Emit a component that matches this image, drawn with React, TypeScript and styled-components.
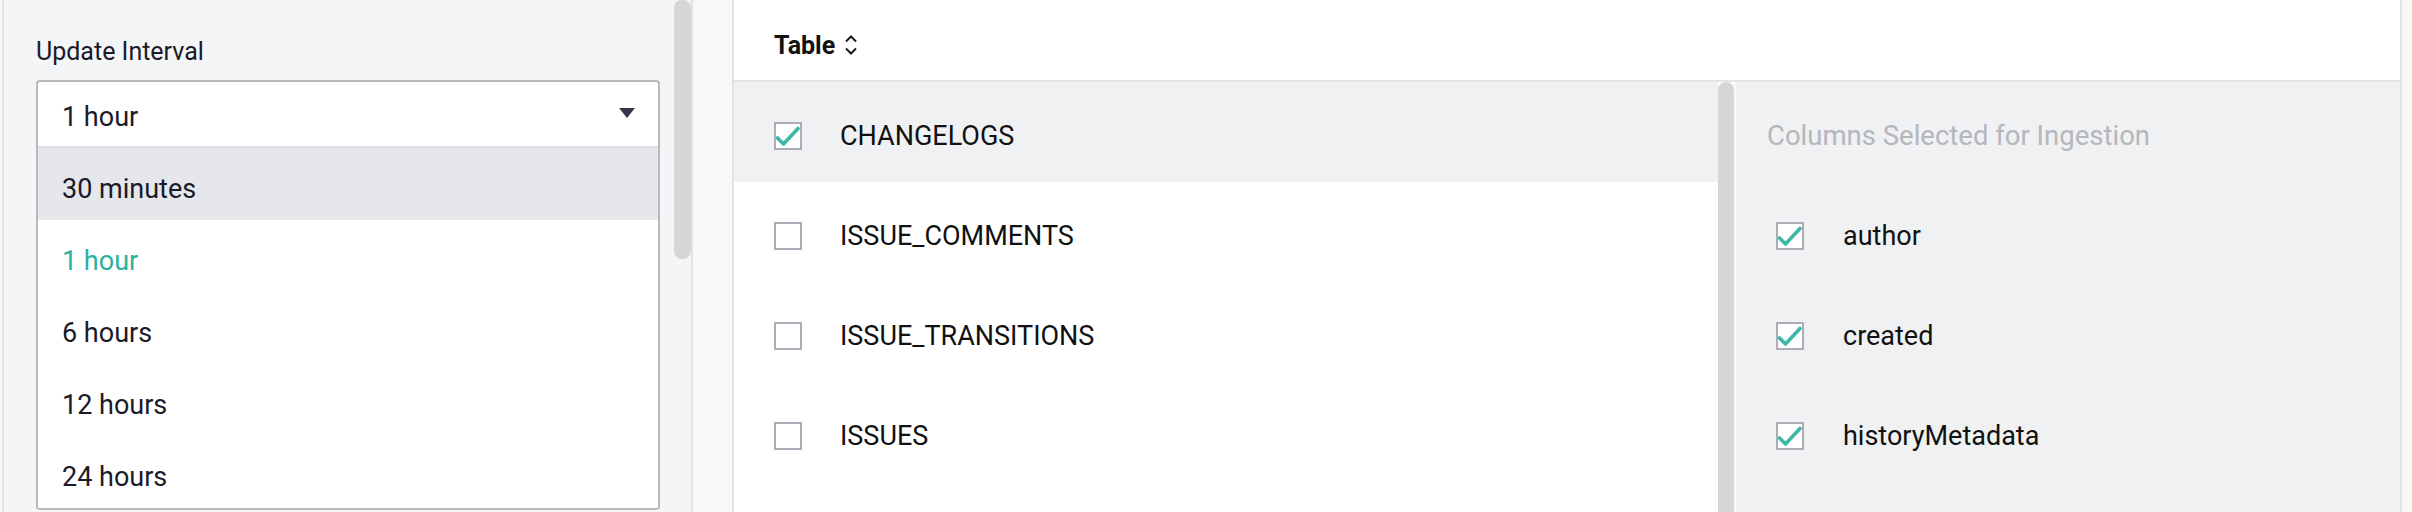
import styled, { createGlobalStyle } from "styled-components";

const intervals = ["30 minutes", "1 hour", "6 hours", "12 hours", "24 hours"];
const tables = ["CHANGELOGS", "ISSUE_COMMENTS", "ISSUE_TRANSITIONS", "ISSUES"];
const columns = ["author", "created", "historyMetadata"];

const GlobalStyle = createGlobalStyle`
  body {
    margin: 0;
    background: #f8f8f8;
    font-family: Roboto, "Liberation Sans", sans-serif;
    color: #14141f;
  }
`;

function Check({ checked }: { checked?: boolean }) {
  return (
    <Checkbox>
      {checked && (
        <svg width="24" height="24" viewBox="0 0 24 24">
          <path
            d="M1.5 14 L7.5 20 L22 4.5"
            fill="none"
            stroke="#3db7a6"
            strokeWidth="3.6"
            strokeLinecap="round"
            strokeLinejoin="round"
          />
        </svg>
      )}
    </Checkbox>
  );
}

export default function App() {
  return (
    <Page>
      <GlobalStyle />
      <LeftPanel>
        <PanelContent>
          <FieldLabel>Update Interval</FieldLabel>
          <Dropdown>
            <SelectBox>
              <SelectValue>1 hour</SelectValue>
              <Caret />
            </SelectBox>
            {intervals.map((item, i) => (
              <Option key={item} $active={i === 0} $selected={item === "1 hour"}>
                {item}
              </Option>
            ))}
          </Dropdown>
        </PanelContent>
        <Scrollbar>
          <ScrollThumb $height={259} />
        </Scrollbar>
      </LeftPanel>
      <Gutter />
      <TablePanel>
        <TableHeader>
          <HeaderLabel>Table</HeaderLabel>
          <SortIcon width="16" height="24" viewBox="0 0 16 24">
            <path
              d="M3 8.5 L8 3.5 L13 8.5 M3 15.5 L8 20.5 L13 15.5"
              fill="none"
              stroke="#1a1a1a"
              strokeWidth="2"
            />
          </SortIcon>
        </TableHeader>
        <TableBody>
          <TableList>
            {tables.map((name, i) => (
              <TableRow key={name} $selected={i === 0}>
                <Check checked={i === 0} />
                <RowLabel>{name}</RowLabel>
              </TableRow>
            ))}
          </TableList>
          <Scrollbar $width={16}>
            <ScrollThumb $height={600} />
          </Scrollbar>
          <ColumnPanel>
            <ColumnHeading>Columns Selected for Ingestion</ColumnHeading>
            {columns.map((name) => (
              <ColumnRow key={name}>
                <Check checked />
                <RowLabel>{name}</RowLabel>
              </ColumnRow>
            ))}
          </ColumnPanel>
        </TableBody>
      </TablePanel>
    </Page>
  );
}

const Page = styled.div`
  display: flex;
  width: 2412px;
  height: 512px;
  overflow: hidden;
  background: #f8f8f8;
`;

const LeftPanel = styled.div`
  display: flex;
  width: 687px;
  margin-left: 2px;
  border-left: 2px solid #e2e2e2;
  border-right: 2px solid #e2e2e2;
  background: #f4f5f7;
  overflow: hidden;
`;

const PanelContent = styled.div`
  flex: 1;
  padding: 37px 14px 0 32px;
`;

const FieldLabel = styled.div`
  font-size: 25px;
  line-height: 30px;
  margin-bottom: 13px;
  color: #1a1a28;
`;

const Dropdown = styled.div`
  width: 624px;
  box-sizing: border-box;
  border: 2px solid #b9b9bd;
  border-radius: 4px;
  background: #ffffff;
  overflow: hidden;
`;

const SelectBox = styled.div`
  display: flex;
  align-items: center;
  justify-content: space-between;
  height: 66px;
  box-sizing: border-box;
  padding: 6px 23px 0 24px;
  border-bottom: 2px solid #dedfe2;
`;

const SelectValue = styled.span`
  font-size: 27px;
  color: #1a1a28;
`;

const Caret = styled.span`
  width: 0;
  height: 0;
  margin-top: -8px;
  border-left: 8px solid transparent;
  border-right: 8px solid transparent;
  border-top: 10px solid #36364a;
`;

const Option = styled.div<{ $active?: boolean; $selected?: boolean }>`
  display: flex;
  align-items: center;
  height: 72px;
  padding: 10px 0 0 24px;
  box-sizing: border-box;
  font-size: 27px;
  background: ${(p) => (p.$active ? "#e5e7eb" : "#ffffff")};
  color: ${(p) => (p.$selected ? "#2ab0a0" : "#1a1a28")};
`;

const Scrollbar = styled.div<{ $width?: number }>`
  flex: 0 0 ${(p) => p.$width ?? 17}px;
  overflow: hidden;
`;

const ScrollThumb = styled.div<{ $height: number }>`
  height: ${(p) => p.$height}px;
  background: #d6d6d6;
  border-radius: 8px;
`;

const Gutter = styled.div`
  flex: 0 0 39px;
`;

const TablePanel = styled.div`
  display: flex;
  flex-direction: column;
  width: 1666px;
  border-left: 2px solid #e2e2e2;
  border-right: 2px solid #e2e2e2;
  background: #ffffff;
`;

const TableHeader = styled.div`
  display: flex;
  align-items: center;
  gap: 8px;
  height: 82px;
  padding: 10px 0 0 40px;
  box-sizing: border-box;
  border-bottom: 2px solid #e3e4e6;
  flex: 0 0 auto;
`;

const HeaderLabel = styled.span`
  font-size: 25px;
  font-weight: 700;
  color: #111111;
`;

const SortIcon = styled.svg`
  display: block;
`;

const TableBody = styled.div`
  display: flex;
  flex: 1;
  min-height: 0;
`;

const TableList = styled.div`
  flex: 0 0 984px;
`;

const TableRow = styled.div<{ $selected?: boolean }>`
  display: flex;
  align-items: center;
  gap: 38px;
  height: 100px;
  box-sizing: border-box;
  padding: 7px 0 0 40px;
  background: ${(p) => (p.$selected ? "#f0f1f3" : "#ffffff")};
`;

const Checkbox = styled.span`
  display: flex;
  align-items: center;
  justify-content: center;
  width: 28px;
  height: 28px;
  box-sizing: border-box;
  border: 2px solid #abacb6;
  background: #ffffff;
  flex: 0 0 auto;
`;

const RowLabel = styled.span`
  font-size: 27px;
  color: #111111;
`;

const ColumnPanel = styled.div`
  flex: 1;
  background: #f0f1f3;
  border-left: 2px solid #f7f7f8;
`;

const ColumnHeading = styled.div`
  display: flex;
  align-items: center;
  height: 100px;
  box-sizing: border-box;
  padding: 6px 0 0 31px;
  font-size: 27.5px;
  color: #b4b7bc;
`;

const ColumnRow = styled.div`
  display: flex;
  align-items: center;
  gap: 39px;
  height: 100px;
  box-sizing: border-box;
  padding: 7px 0 0 40px;
`;
